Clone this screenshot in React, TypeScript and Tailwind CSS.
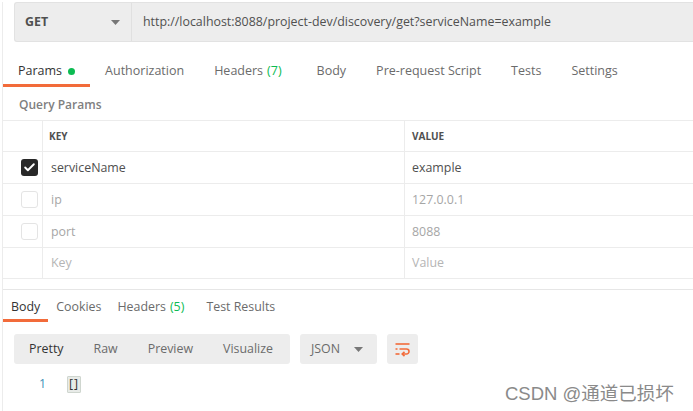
import { Check } from "lucide-react"

const requestTabs = [
  { label: "Params", active: true, dot: true },
  { label: "Authorization" },
  { label: "Headers", count: "(7)" },
  { label: "Body" },
  { label: "Pre-request Script" },
  { label: "Tests" },
  { label: "Settings" },
]

const params = [
  { key: "serviceName", value: "example", checked: true, enabled: true },
  { key: "ip", value: "127.0.0.1", checked: false, enabled: false },
  { key: "port", value: "8088", checked: false, enabled: false },
]

const responseTabs = [
  { label: "Body", active: true },
  { label: "Cookies" },
  { label: "Headers", count: "(5)" },
  { label: "Test Results" },
]

function Caret() {
  return (
    <svg width="9" height="5" viewBox="0 0 9 5" className="fill-[#777]">
      <path d="M0 0 H9 L4.5 5 Z" />
    </svg>
  )
}

function WrapIcon() {
  return (
    <svg width="17" height="16" viewBox="0 0 17 16" fill="none" stroke="#f26b3a" strokeWidth="1.6">
      <path d="M1.5 3 H15.5" />
      <path d="M1.5 8 H3.5 M5.5 8 H12.5 a2.5 2.5 0 0 1 0 5 H8.5" />
      <path d="M10.5 10.8 L8.2 13 L10.5 15.2" />
      <path d="M1.5 13 H5.5" />
    </svg>
  )
}

export default function App() {
  return (
    <div className="relative w-[693px] h-[411px] overflow-hidden bg-white font-['Open_Sans',sans-serif]">
      <div className="ml-[2px] h-full border-l border-[#ececec]">
        {/* URL bar */}
        <div className="mt-[2px] ml-[11px] flex h-[40px] rounded-l-[3px] border border-r-0 border-[#e2e2e2] bg-[#ededed]">
          <div className="flex w-[117px] items-center justify-between border-r border-[#e0e0e0] pl-[10px] pr-[11px]">
            <span className="text-[12.4px] font-bold text-[#505050]">GET</span>
            <Caret />
          </div>
          <div className="flex items-center pl-[11px] text-[12.4px] text-[#505050]">
            http://localhost:8088/project-dev/discovery/get?serviceName=example
          </div>
        </div>

        {/* Request tabs */}
        <div className="mt-[14px] flex">
          {requestTabs.map((tab) => (
            <div
              key={tab.label}
              className={
                tab.active
                  ? "flex h-[31px] items-center gap-[6px] border-b-[3px] border-[#f26b3a] px-[15px] pt-[3px] text-[12.5px] text-[#333]"
                  : "flex h-[31px] items-center gap-[4px] border-b-[3px] border-transparent px-[15px] pt-[3px] text-[12.5px] text-[#6b6b6b]"
              }
            >
              <span>{tab.label}</span>
              {tab.count && <span className="mr-[5px] text-[#0cbb52]">{tab.count}</span>}
              {tab.dot && <span className="h-[7px] w-[7px] rounded-full bg-[#0cbb52]" />}
            </div>
          ))}
        </div>

        <div className="flex h-[33px] items-center pl-[16px] pt-[2px] text-[12px] font-semibold text-[#808080]">
          Query Params
        </div>

        {/* Params table */}
        <div className="border-t border-[#ececec]">
          <div className="grid h-[31px] grid-cols-[40px_362px_1fr] border-b border-[#ececec]">
            <div className="border-r border-[#ececec]" />
            <div className="flex items-center border-r border-[#ececec] pl-[6px] text-[10px] font-bold text-[#505050]">
              KEY
            </div>
            <div className="flex items-center pl-[7px] text-[10px] font-bold text-[#505050]">VALUE</div>
          </div>
          {params.map((p) => (
            <div key={p.key} className="grid h-[32px] grid-cols-[40px_362px_1fr] border-b border-[#ececec]">
              <div className="flex items-center justify-end border-r border-[#ececec] pr-[4px]">
                {p.checked ? (
                  <div className="flex h-[17px] w-[17px] items-center justify-center rounded-[3px] bg-[#282828]">
                    <Check size={13} strokeWidth={3.5} className="text-white" />
                  </div>
                ) : (
                  <div className="h-[17px] w-[17px] rounded-[3px] border border-[#e4e4e4] bg-white" />
                )}
              </div>
              <div
                className={
                  p.enabled
                    ? "flex items-center border-r border-[#ececec] pl-[8px] pt-[1px] text-[12.4px] text-[#505050]"
                    : "flex items-center border-r border-[#ececec] pl-[8px] pt-[1px] text-[12.4px] text-[#a6a6a6]"
                }
              >
                {p.key}
              </div>
              <div
                className={
                  p.enabled
                    ? "flex items-center pl-[7px] pt-[1px] text-[12.4px] text-[#505050]"
                    : "flex items-center pl-[7px] pt-[1px] text-[12.4px] text-[#a6a6a6]"
                }
              >
                {p.value}
              </div>
            </div>
          ))}
          <div className="grid h-[31px] grid-cols-[40px_362px_1fr] border-b border-[#ececec]">
            <div className="border-r border-[#ececec]" />
            <div className="flex items-center border-r border-[#ececec] pl-[8px] pt-[1px] text-[12.4px] text-[#b5b5b5]">Key</div>
            <div className="flex items-center pl-[7px] pt-[1px] text-[12.4px] text-[#b5b5b5]">Value</div>
          </div>
        </div>

        {/* Response */}
        <div className="mt-[10px] border-t border-[#e6e6e6]">
          <div className="flex">
            {responseTabs.map((tab) => (
              <div
                key={tab.label}
                className={
                  tab.active
                    ? "flex h-[32px] items-center gap-[4px] border-b-[3px] border-[#f26b3a] px-[8px] pt-[5px] text-[12.4px] text-[#333]"
                    : "flex h-[32px] items-center gap-[4px] border-b-[3px] border-transparent px-[8px] pt-[5px] text-[12.4px] text-[#6b6b6b]"
                }
              >
                <span>{tab.label}</span>
                {tab.count && <span className="mr-[6px] text-[#0cbb52]">{tab.count}</span>}
              </div>
            ))}
          </div>

          <div className="ml-[11px] mt-[12px] flex h-[30px] gap-[10px]">
            <div className="flex w-[276px] items-center rounded-[3px] bg-[#ededed] text-[12.4px] text-[#6b6b6b]">
              <span className="px-[15px] text-[#333]">Pretty</span>
              <span className="px-[15px]">Raw</span>
              <span className="px-[15px]">Preview</span>
              <span className="px-[15px]">Visualize</span>
            </div>
            <div className="flex w-[77px] items-center justify-between rounded-[3px] bg-[#ededed] pl-[11px] pr-[14px] text-[12.4px] text-[#6b6b6b]">
              <span>JSON</span>
              <Caret />
            </div>
            <div className="flex w-[31px] items-center justify-center rounded-[3px] bg-[#ededed]">
              <WrapIcon />
            </div>
          </div>

          <div className="mt-[11px] flex h-[18px] items-center">
            <span className="w-[43px] text-right text-[12.4px] text-[#3d8fb5]">1</span>
            <span className="ml-[21px] flex h-[17px] items-center rounded-[1px] border border-[#cfd6cf] bg-[#e8ebe8] px-[1px] text-[12.4px] tracking-[1px] text-[#333]">
              []
            </span>
          </div>
        </div>
      </div>

      <div className="absolute left-[505px] top-[382px] text-[18.5px] leading-[24px] text-[#8a8a8a] font-['Liberation_Sans','Noto_Sans_CJK_SC',sans-serif] [text-shadow:1px_1px_0_#fff]">
        CSDN @通道已损坏
      </div>
    </div>
  )
}
